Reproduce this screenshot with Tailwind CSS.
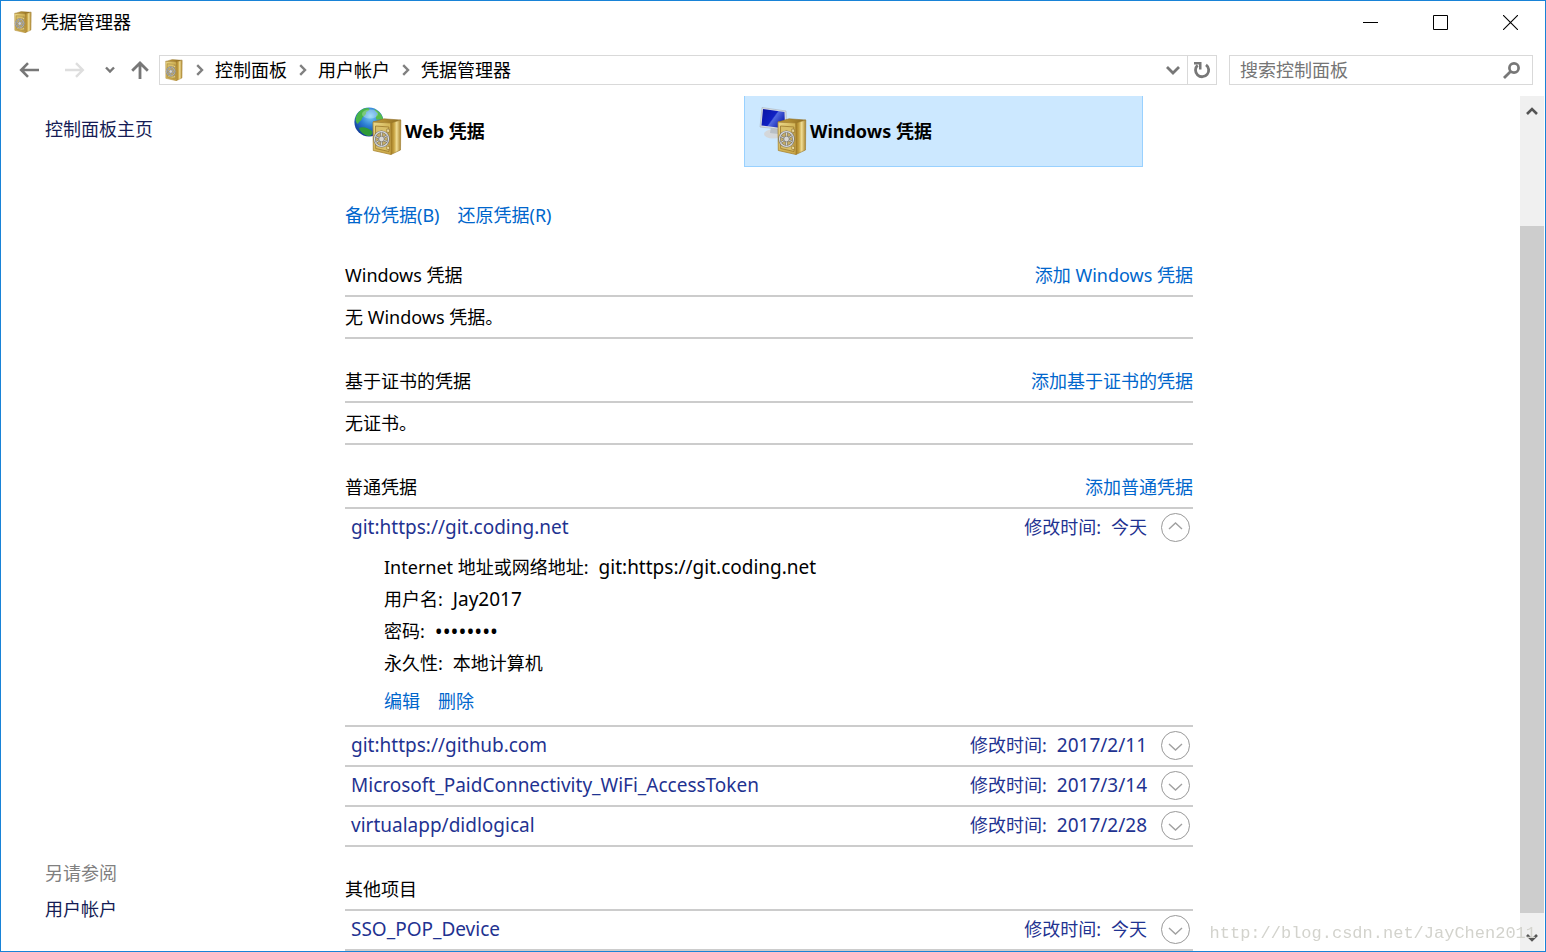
<!DOCTYPE html>
<html lang="zh-CN">
<head>
<meta charset="utf-8">
<meta name="viewport" content="width=device-width, initial-scale=1">
<title>凭据管理器</title>
<script src="https://cdn.jsdelivr.net/npm/@tailwindcss/browser@4"></script>
</head>
<body class="bg-white font-['Noto_Sans','Noto_Sans_CJK_SC',sans-serif] text-lg leading-6 text-black">

<!-- shared icon symbols -->
<svg class="absolute size-0" aria-hidden="true">
  <defs>
    <linearGradient id="gFront" x1="0" y1="0" x2="1" y2="1"><stop offset="0" stop-color="#ecd98c"/><stop offset=".5" stop-color="#d3b659"/><stop offset="1" stop-color="#c9a545"/></linearGradient>
    <linearGradient id="gSide" x1="0" y1="0" x2="1" y2="0"><stop offset="0" stop-color="#9a7420"/><stop offset=".35" stop-color="#c9a544"/><stop offset=".6" stop-color="#f0dd95"/><stop offset="1" stop-color="#a8822c"/></linearGradient>
    <linearGradient id="gTop" x1="0" y1="0" x2="1" y2="0"><stop offset="0" stop-color="#c6a03c"/><stop offset="1" stop-color="#8f6d22"/></linearGradient>
    <radialGradient id="gSea" cx=".55" cy=".3" r=".75"><stop offset="0" stop-color="#7fd0f5"/><stop offset=".45" stop-color="#2c7fd4"/><stop offset="1" stop-color="#0c2f8c"/></radialGradient>
    <linearGradient id="gScreen" x1="0" y1="0" x2="1" y2=".6"><stop offset="0" stop-color="#0a14a0"/><stop offset=".55" stop-color="#0f20c4"/><stop offset=".6" stop-color="#5068e0"/><stop offset="1" stop-color="#1020b0"/></linearGradient>
    <symbol id="safe" viewBox="0 0 30 37">
      <path d="M1 4 L12 0.8 L28.5 2 L20 5.2Z" fill="url(#gTop)" stroke="#94742b" stroke-width=".6"/>
      <path d="M18.5 5 L28.8 2 L28.5 32 L19 36.5Z" fill="url(#gSide)" stroke="#9b7828" stroke-width=".6"/>
      <path d="M1 4 L18.5 5 L19 36.5 L1.3 32.5Z" fill="url(#gFront)" stroke="#a9842f" stroke-width=".8"/>
      <path d="M3.5 8 L16.8 9 L17 33.5 L3.7 30.5Z" fill="#d9bf69" stroke="#9a772b" stroke-width=".8"/>
      <path d="M14.8 11 L17.3 11.2 V14.5 L14.8 14.2Z M14.8 28 L17.3 28.5 V31.7 L14.8 31.2Z" fill="#f4e6ad" stroke="#866520" stroke-width=".6"/>
      <ellipse cx="9.5" cy="21" rx="7" ry="7.4" fill="#c5ad68" stroke="#6e6d68" stroke-width="2.4"/>
      <ellipse cx="9.5" cy="21" rx="7" ry="7.4" fill="none" stroke="#d9dadb" stroke-width="1.2"/>
      <path d="M9.5 14.5V27.5M3.5 18.5L15.5 23.8M3.8 24.5L15.2 17.6" stroke="#77756d" stroke-width="2"/>
      <path d="M9.5 14.5V27.5M3.5 18.5L15.5 23.8M3.8 24.5L15.2 17.6" stroke="#dddddc" stroke-width=".9"/>
      <circle cx="9.5" cy="21" r="2.8" fill="#d8d8d6" stroke="#77766f" stroke-width=".7"/>
    </symbol>
    <symbol id="chev" viewBox="0 0 29 29">
      <circle cx="14.5" cy="14.5" r="14" fill="none" stroke="#999" stroke-width="1"/>
      <path d="M8 13L14.5 19L21 13" fill="none" stroke="#a0a0a0" stroke-width="1.4"/>
    </symbol>
    <symbol id="crumb" viewBox="0 0 8 12"><path d="M1.2 1.2L6 6L1.2 10.8" fill="none" stroke="#808080" stroke-width="2.4"/></symbol>
  </defs>
</svg>

<div class="flex h-screen flex-col overflow-hidden border border-[#1883d7]">

  <!-- title bar -->
  <header class="flex h-[42px] shrink-0 items-center pl-3">
    <svg class="h-[22px] w-5" aria-hidden="true"><use href="#safe"/></svg>
    <h1 class="ml-2 flex-1">凭据管理器</h1>
    <button class="flex h-full w-[70px] items-center justify-center" aria-label="最小化"><svg class="size-[15px]" viewBox="0 0 15 15"><path d="M0 7.5H15" stroke="#000"/></svg></button>
    <button class="flex h-full w-[70px] items-center justify-center" aria-label="最大化"><svg class="size-[15px]" viewBox="0 0 15 15"><path d="M.5 .5H14.5V14.5H.5Z" fill="none" stroke="#000"/></svg></button>
    <button class="flex h-full w-[70px] items-center justify-center" aria-label="关闭"><svg class="size-[15px]" viewBox="0 0 15 15"><path d="M0 0L15 15M15 0L0 15" stroke="#000" stroke-width="1.1"/></svg></button>
  </header>

  <!-- navigation bar -->
  <nav class="flex h-[53px] shrink-0 items-center pt-px pr-3" aria-label="导航">
    <button class="ml-[18px] w-5" aria-label="后退"><svg class="h-4 w-5" viewBox="0 0 20 16"><path d="M20 8H2.5M9 1.2L2.2 8L9 14.8" fill="none" stroke="#777" stroke-width="2.6"/></svg></button>
    <button class="ml-[26px] w-5" aria-label="前进" disabled><svg class="h-4 w-5" viewBox="0 0 20 16"><path d="M0 8H17.5M11 1.2L17.8 8L11 14.8" fill="none" stroke="#dedede" stroke-width="2.4"/></svg></button>
    <button class="ml-5 w-2.5" aria-label="最近浏览的位置"><svg class="h-2 w-2.5" viewBox="0 0 10 8"><path d="M1 1.5L5 5.5L9 1.5" fill="none" stroke="#777" stroke-width="2.4"/></svg></button>
    <button class="ml-4 w-[18px]" aria-label="上移"><svg class="h-[18px] w-[18px]" viewBox="0 0 18 18"><path d="M9 18V2.5M1.2 9.8L9 2L16.8 9.8" fill="none" stroke="#777" stroke-width="2.8"/></svg></button>
    <div class="ml-2.5 flex h-[30px] flex-1 items-center border border-[#d9d9d9] pl-1">
      <svg class="h-[22px] w-5" aria-hidden="true"><use href="#safe"/></svg>
      <svg class="ml-3 h-3 w-2" aria-hidden="true"><use href="#crumb"/></svg>
      <a href="#" class="ml-[11px]">控制面板</a>
      <svg class="ml-3 h-3 w-2" aria-hidden="true"><use href="#crumb"/></svg>
      <a href="#" class="ml-[11px]">用户帐户</a>
      <svg class="ml-3 h-3 w-2" aria-hidden="true"><use href="#crumb"/></svg>
      <a href="#" class="ml-[11px]">凭据管理器</a>
      <button class="ml-auto flex h-full w-7 items-center justify-center" aria-label="以前的位置"><svg class="h-[10px] w-[14px]" viewBox="0 0 14 10"><path d="M1 2L7 8L13 2" fill="none" stroke="#777" stroke-width="2.8"/></svg></button>
      <button class="flex h-full w-[29px] items-center justify-center border-l border-[#d9d9d9]" aria-label="刷新"><svg class="h-[18px] w-[18px]" viewBox="0 0 18 18"><path d="M13 3.8A6.6 6.6 0 1 1 4.6 4.3" fill="none" stroke="#777" stroke-width="2.8"/><path d="M1 1H8.5V8.5H6V3.4H1Z" fill="#777"/></svg></button>
    </div>
    <form class="ml-3 flex h-[30px] w-[304px] items-center border border-[#d9d9d9] pr-3 pl-2.5">
      <input type="search" aria-label="搜索控制面板" placeholder="搜索控制面板" class="min-w-0 flex-1 outline-none placeholder:text-[#757575]">
      <button aria-label="搜索"><svg class="size-[17px]" viewBox="0 0 17 17"><circle cx="11" cy="6" r="4.6" fill="none" stroke="#777" stroke-width="2.7"/><path d="M7.8 9.300L1 16" stroke="#777" stroke-width="2.8"/></svg></button>
    </form>
  </nav>

  <div class="flex min-h-0 flex-1">
    <!-- sidebar -->
    <aside class="flex w-[338px] shrink-0 flex-col pt-[21px] pb-[30px] pl-11">
      <a href="#" class="text-[#151c55]">控制面板主页</a>
      <p class="mt-auto text-[#808080]">另请参阅</p>
      <a href="#" class="mt-3 text-[#151c55]">用户帐户</a>
    </aside>

    <main class="min-w-0 flex-1 overflow-hidden">
      <div class="max-w-[854px]">
        <div class="flex gap-1.5">
          <button class="flex h-[71px] w-[399px] items-center border border-t-0 border-transparent pl-3.5 text-left font-bold">
            <svg class="size-12" viewBox="0 0 48 48" aria-hidden="true">
              <circle cx="15" cy="15" r="14.6" fill="url(#gSea)"/>
              <path d="M2 10C4 4 9 1 14 1C17 2 15 4 12 5C13 7 10 9 8 11C8 14 5 14 4 17C2 16 1 13 2 10Z" fill="#49b548"/>
              <path d="M5 21C9 19 14 21 18 24C19 27 17 29 14 29C10 28 6 25 5 21Z" fill="#2f9a37"/>
              <path d="M20 2C25 4 29 8 29.4 14C27 13 25 12 23 13C21 11 22 8 24 7C22 5 21 4 20 2Z" fill="#58bd4a"/>
              <ellipse cx="16" cy="7" rx="8" ry="4.5" fill="#fff" opacity=".28"/>
              <use href="#safe" x="18" y="11" width="30" height="37"/>
            </svg>
            <span class="ml-[3px]">Web 凭据</span>
          </button>
          <button class="flex h-[71px] w-[399px] items-center border border-t-0 border-[#99d1ff] bg-[#cce8ff] pl-3.5 text-left font-bold">
            <svg class="size-12" viewBox="0 0 48 48" aria-hidden="true">
              <ellipse cx="14" cy="27" rx="9" ry="4.5" fill="#d4d7da"/>
              <path d="M12 20L20 21L19 27L11 26Z" fill="#b9bfc5"/>
              <path d="M3 .5L27 4L28 23L1 20Z" fill="#d8dde2" stroke="#aab4bd" stroke-width=".6"/>
              <path d="M4 2L25.5 5L26 21.5L2.5 18.5Z" fill="url(#gScreen)"/>
              <use href="#safe" x="18" y="11" width="30" height="37"/>
            </svg>
            <span class="ml-[3px]">Windows 凭据</span>
          </button>
        </div>

        <div class="pl-1.5">
          <div class="mt-9 flex gap-[18px] text-[#0066cc]">
            <a href="#">备份凭据(B)</a>
            <a href="#">还原凭据(R)</a>
          </div>

          <section class="mt-7">
            <div class="flex h-[42px] items-center justify-between border-b-2 border-[#ccc]"><h2>Windows 凭据</h2><a href="#" class="text-[#0066cc]">添加 Windows 凭据</a></div>
            <p class="flex h-[42px] items-center border-b-2 border-[#ccc]">无 Windows 凭据。</p>
          </section>

          <section class="mt-[22px]">
            <div class="flex h-[42px] items-center justify-between border-b-2 border-[#ccc]"><h2>基于证书的凭据</h2><a href="#" class="text-[#0066cc]">添加基于证书的凭据</a></div>
            <p class="flex h-[42px] items-center border-b-2 border-[#ccc]">无证书。</p>
          </section>

          <section class="mt-[22px]">
            <div class="flex h-[42px] items-center justify-between border-b-2 border-[#ccc]"><h2>普通凭据</h2><a href="#" class="text-[#0066cc]">添加普通凭据</a></div>
            <div class="border-b-2 border-[#ccc]">
              <button aria-expanded="true" class="flex h-[38px] w-full items-center pr-[3px] pb-0.5 pl-1.5 text-left text-[#1f3391]">
                <span class="flex-1 text-[19px]">git:https://git.coding.net</span><span>修改时间:</span><span class="ml-2.5">今天</span>
                <svg class="ml-3.5 size-[29px] rotate-180" aria-hidden="true"><use href="#chev"/></svg>
              </button>
              <dl class="pt-1 pl-[39px]">
                <div class="flex h-8 items-center gap-2.5"><dt>Internet 地址或网络地址:</dt><dd class="text-[19px]">git:https://git.coding.net</dd></div>
                <div class="flex h-8 items-center gap-2.5"><dt>用户名:</dt><dd class="text-[19px]">Jay2017</dd></div>
                <div class="flex h-8 items-center gap-2.5"><dt>密码:</dt><dd class="text-[21px]">••••••••</dd></div>
                <div class="flex h-8 items-center gap-2.5"><dt>永久性:</dt><dd>本地计算机</dd></div>
              </dl>
              <div class="mt-1.5 mb-2 flex h-8 items-center gap-[18px] pl-[39px] text-[#0066cc]"><a href="#">编辑</a><a href="#">删除</a></div>
            </div>
            <button aria-expanded="false" class="flex h-10 w-full items-center border-b-2 border-[#ccc] pr-[3px] pb-0.5 pl-1.5 text-left text-[#1f3391]">
              <span class="flex-1 text-[19px]">git:https://github.com</span><span>修改时间:</span><span class="ml-2.5 text-[19px]">2017/2/11</span>
              <svg class="ml-3.5 size-[29px]" aria-hidden="true"><use href="#chev"/></svg>
            </button>
            <button aria-expanded="false" class="flex h-10 w-full items-center border-b-2 border-[#ccc] pr-[3px] pb-0.5 pl-1.5 text-left text-[#1f3391]">
              <span class="flex-1 text-[19px]">Microsoft_PaidConnectivity_WiFi_AccessToken</span><span>修改时间:</span><span class="ml-2.5 text-[19px]">2017/3/14</span>
              <svg class="ml-3.5 size-[29px]" aria-hidden="true"><use href="#chev"/></svg>
            </button>
            <button aria-expanded="false" class="flex h-10 w-full items-center border-b-2 border-[#ccc] pr-[3px] pb-0.5 pl-1.5 text-left text-[#1f3391]">
              <span class="flex-1 text-[19px]">virtualapp/didlogical</span><span>修改时间:</span><span class="ml-2.5 text-[19px]">2017/2/28</span>
              <svg class="ml-3.5 size-[29px]" aria-hidden="true"><use href="#chev"/></svg>
            </button>
          </section>

          <section class="mt-[22px]">
            <div class="flex h-[42px] items-center border-b-2 border-[#ccc]"><h2>其他项目</h2></div>
            <button aria-expanded="false" class="flex h-10 w-full items-center border-b-2 border-[#ccc] pr-[3px] pb-0.5 pl-1.5 text-left text-[#1f3391]">
              <span class="flex-1 text-[19px]">SSO_POP_Device</span><span>修改时间:</span><span class="ml-2.5">今天</span>
              <svg class="ml-3.5 size-[29px]" aria-hidden="true"><use href="#chev"/></svg>
            </button>
          </section>
        </div>
      </div>
    </main>

    <!-- scroll bar -->
    <div class="mr-px flex w-6 shrink-0 flex-col bg-[#f0f0f0]">
      <button class="flex h-[30px] items-center justify-center" aria-label="向上滚动"><svg class="h-[10px] w-3" viewBox="0 0 12 10"><path d="M1 8L6 3L11 8" fill="none" stroke="#555" stroke-width="2.6"/></svg></button>
      <div class="mt-[100px] flex-1 bg-[#cdcdcd]"></div>
      <button class="flex h-[38px] items-center justify-center pt-3" aria-label="向下滚动"><svg class="h-[10px] w-3" viewBox="0 0 12 10"><path d="M1 2L6 7L11 2" fill="none" stroke="#555" stroke-width="2.6"/></svg></button>
    </div>
  </div>
</div>

<p class="pointer-events-none fixed right-2.5 bottom-1.5 font-['Liberation_Mono',monospace] text-[17px] text-[#d3d3cd]">http://blog.csdn.net/JayChen2011</p>
</body>
</html>
